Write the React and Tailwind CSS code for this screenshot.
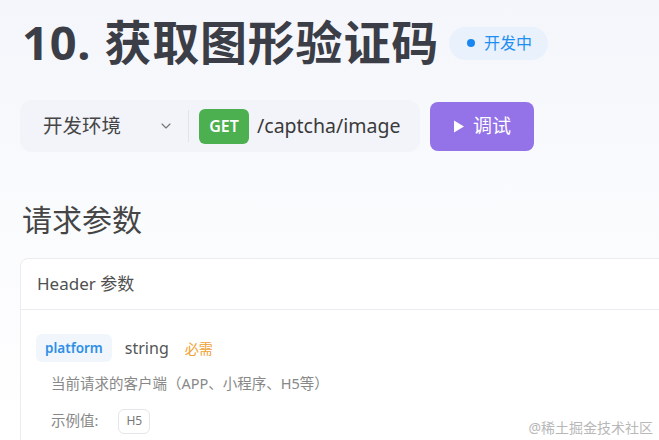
import { ChevronDown } from "lucide-react"

export default function App() {
  return (
    <main
      className="relative h-[440px] w-[659px] overflow-hidden bg-gradient-to-b from-[#f5f6fb] via-[#fafbfd] to-white text-[#3d4048]"
      style={{ fontFamily: '"Noto Sans", "Noto Sans CJK SC", sans-serif' }}
    >
      <div className="pl-[22px] pt-[14px]">
        <div className="flex items-center">
          <h1 className="text-[47px] font-bold leading-[56px] tracking-[0.8px] text-[#3b3e47]">
            10. 获取图形验证码
          </h1>
          <span className="ml-[10px] mt-[2px] flex h-[33px] items-center rounded-full bg-[#e9f1fd] pl-[18px] pr-[16px] text-[16px] text-[#1f8ef1]">
            <span className="mr-[9px] h-[8px] w-[8px] rounded-full bg-[#1a86f2]" />
            开发中
          </span>
        </div>

        <div className="mt-[30px] flex items-center">
          <div className="ml-[-2px] flex h-[52px] w-[400px] items-center rounded-xl bg-[#f3f4fa] pl-[23px]">
            <span className="text-[19.5px] text-[#454545]">开发环境</span>
            <ChevronDown className="ml-[37px] h-[16px] w-[16px] text-[#777]" strokeWidth={1.75} />
            <span className="ml-[14px] h-[32px] w-px bg-[#e2e3ea]" />
            <span className="ml-[10px] flex h-[35px] w-[50px] items-center justify-center rounded-md bg-[#4caf50] text-[16px] font-semibold text-white">
              GET
            </span>
            <span className="ml-[8px] text-[19.5px] text-[#3a3a3a]">/captcha/image</span>
          </div>
          <button className="ml-[10px] flex h-[49px] w-[104px] items-center justify-center rounded-lg bg-[#9473e8] text-[19px] text-white">
            <svg viewBox="0 0 12 14" className="mr-[8px] h-[15px] w-[12px]" fill="white">
              <path d="M1 1 L11 7 L1 13 Z" />
            </svg>
            调试
          </button>
        </div>

        <h2 className="mt-[48px] text-[30px] leading-[40px] text-[#454545]">请求参数</h2>
      </div>

      <div className="ml-[20px] mt-[18px] h-[260px] w-[660px] rounded-lg border border-[#ececf0] bg-white">
        <div className="flex h-[51px] items-center border-b border-[#ececf0] pl-[16px] text-[17px] text-[#505050]">
          Header 参数
        </div>
        <div className="pl-[15px] pt-[24px]">
          <div className="flex items-center">
            <span className="flex h-[28px] items-center rounded-md bg-[#f1f6fd] px-[9px] text-[13.5px] font-semibold text-[#2f8fe6]">
              platform
            </span>
            <span className="ml-[13px] text-[16px] text-[#555]">string</span>
            <span className="ml-[16px] text-[14px] text-[#f0a030]">必需</span>
          </div>
          <p className="ml-[15px] mt-[11px] text-[14.5px] text-[#888]">当前请求的客户端（APP、小程序、H5等）</p>
          <div className="ml-[15px] mt-[14px] flex items-center">
            <span className="text-[14.5px] text-[#888]">示例值:</span>
            <span className="ml-[20px] flex h-[25px] items-center rounded-md border border-[#e6e6ea] px-[7px] text-[12px] text-[#777]">
              H5
            </span>
          </div>
        </div>
      </div>

      <span className="absolute bottom-[2px] right-[6px] text-[14px] text-[#b8b8b8]">@稀土掘金技术社区</span>
    </main>
  )
}
